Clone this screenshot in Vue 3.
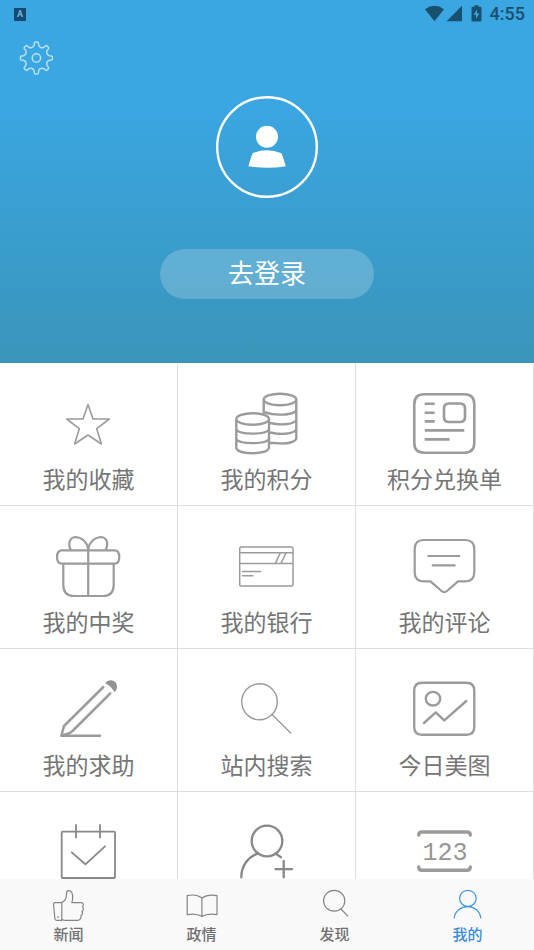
<script setup>
import { ref } from 'vue'

const active = ref('mine')

const point = (x, y, turn) => {
  const a = (turn * Math.PI) / 180
  const px = 20.4 + x * Math.cos(a) - y * Math.sin(a)
  const py = 20 + x * Math.sin(a) + y * Math.cos(a)
  return `${px.toFixed(2)} ${py.toFixed(2)}`
}

// Eight rounded teeth joined by curved valleys.
const gearPath =
  Array.from({ length: 8 }, (_, i) => {
    const t = i * 45
    return [
      `${i ? 'L' : 'M'}${point(-2.2, -13, t)}`,
      `L${point(-2.1, -14.8, t)}`,
      `Q${point(-2, -16, t)} ${point(-1, -16, t)}`,
      `L${point(1, -16, t)}`,
      `Q${point(2, -16, t)} ${point(2.1, -14.8, t)}`,
      `L${point(2.2, -13, t)}`,
      `C${point(3, -10.6, t)} ${point(-3, -10.6, t + 45)} ${point(-2.2, -13, t + 45)}`
    ].join('')
  }).join('') + 'Z'

const entries = [
  {
    id: 'favorites',
    label: '我的收藏',
    width: 1.6,
    d: 'M40 20.5L45 35H61.3L48.7 44.7L53.4 60L40 51L26.6 60L31.3 44.7L18.7 35H35Z'
  },
  {
    id: 'points',
    label: '我的积分',
    width: 2.4,
    d: 'M37.7 15.5A16.3 5.7 0 0 1 70.3 15.5A16.3 5.7 0 0 1 37.7 15.5V29M70.3 15.5V54C70.3 57.5 62 60 54 59.4L44 58.8M70.3 26C69 29.5 60 31 53 30.6Q45 30.4 39.5 28.5M70.3 36C68 40 58 41 50 40L43 38.8M70.3 45.5C68 49.5 58 50.5 50 49.5L44 48.5M10.3 35A16.3 5.7 0 0 1 43 35A16.3 5.7 0 0 1 10.3 35V64C12 71 41 71 43 64V35M10.3 45.5C13 51 40 51 43 45.5M10.3 55C13 60.5 40 60.5 43 55'
  },
  {
    id: 'orders',
    label: '积分兑换单',
    width: 2.6,
    d: 'M20.3 10.3H60.3Q70.3 10.3 70.3 20.3V58.7Q70.3 68.7 60.3 68.7H20.3Q10.3 68.7 10.3 58.7V20.3Q10.3 10.3 20.3 10.3ZM45 19.5H56Q61 19.5 61 24.5V33Q61 38 56 38H45Q40 38 40 33V24.5Q40 19.5 45 19.5ZM20.7 19.7H30.7M20.7 28.7H30.7M20.7 37.4H30.7M20.7 46.4H60.3M20.7 55.4H45.5',
    butt: true
  },
  {
    id: 'prizes',
    label: '我的中奖',
    width: 2.2,
    d: 'M14 23.3H66.5Q71.3 23.3 71.3 30T66.5 36.7H14Q9 36.7 9 30T14 23.3ZM15.3 36.7V58Q15.3 69 26 69H55Q65.7 69 65.7 58V36.7M40.2 20V69M22.7 23C19.5 16 22 10 28 10C34 10.5 39 15 40.2 22C41.5 15 46.5 10.5 52.5 10C58.5 10 61 16 57.7 23'
  },
  {
    id: 'bank',
    label: '我的银行',
    width: 1.5,
    d: 'M15.2 20H65.5Q67 20 67 21.5V57.5Q67 59 65.5 59H15.2Q13.7 59 13.7 57.5V21.5Q13.7 20 15.2 20ZM13.7 25.7H67M13.7 36.4H67M54.3 26L49.3 36.4M60 26L55 36.4M16.5 44.4H34.7M16.5 48.7H27'
  },
  {
    id: 'comments',
    label: '我的评论',
    width: 2.2,
    d: 'M19.7 13H61.3Q70.3 13 70.3 22V45.3Q70.3 54.3 61.3 54.3H54L43 64Q40.3 66.3 37.6 64L26.5 54.3H19.7Q10.7 54.3 10.7 45.3V22Q10.7 13 19.7 13ZM24.3 29H55.3M28.7 38.4H50.7'
  },
  {
    id: 'help',
    label: '我的求助',
    width: 2.5,
    d: 'M55.3 17L16 56L13.4 65.8H52M62.3 23.3L24.5 61Q23 62.6 20 63.6L13.4 65.8',
    fill: 'M57.2 13C60 9.4 65.6 9.4 68 13C69.8 16 69 20 66.7 22.3Q63.5 16.5 57.2 13Z'
  },
  {
    id: 'search',
    label: '站内搜索',
    width: 1.4,
    d: 'M15.7 31.8A17.8 18 0 1 1 51.3 31.8A17.8 18 0 1 1 15.7 31.8ZM45.7 44.3L64.7 63'
  },
  {
    id: 'pictures',
    label: '今日美图',
    width: 2.4,
    d: 'M18 12.7H62.3Q70.3 12.7 70.3 20.7V56.7Q70.3 64.7 62.3 64.7H18Q10.2 64.7 10.2 56.7V20.7Q10.2 12.7 18 12.7ZM21.8 28.7A7.2 6.8 0 1 1 36.2 28.7A7.2 6.8 0 1 1 21.8 28.7ZM20 53L31.7 42.4L40.3 50.4L62.3 31'
  },
  {
    id: 'calendar',
    width: 1.8,
    dark: true,
    d: 'M14.7 18.7H66Q67 18.7 67 19.7V64Q67 65 66 65H14.7Q13.7 65 13.7 64V19.7Q13.7 18.7 14.7 18.7ZM28 12V24.6M52 12V24.6M23.7 39.4L37.4 51.3L57 33.3'
  },
  {
    id: 'invite',
    width: 2.3,
    dark: true,
    d: 'M25.7 28A15.3 15.3 0 1 1 56.3 28A15.3 15.3 0 1 1 25.7 28ZM15.3 64.4C15.3 53 22 43.5 32.3 40.3M49.3 40.4L55 44.2M57.7 48V64.4M49.5 56.2H66'
  },
  {
    id: 'code',
    width: 3.4,
    d: 'M14.7 22Q14.7 19 18 19H63Q66.3 19 66.3 22M14.7 54Q14.7 57.3 18 57.3H63Q66.3 57.3 66.3 54',
    text: '123'
  }
]

const tabs = [
  {
    id: 'news',
    label: '新闻',
    d: 'M4 14.7H10.8V32.4H5.6Q4 32.4 3.9 30.8L2.5 16.4Q2.5 14.7 4 14.7ZM10.8 14.7C15 12 15.5 10 15.5 5C15.6 1.8 19.5 1.8 20.8 4.6C22.2 8 22 11 20.8 14.7H30C32.5 14.9 33 17.2 31.6 18.8C32.8 20.4 32.4 22.4 31 23.4C32 25 31.4 26.8 30 27.6C30.4 30 29 32.4 26.5 32.4H14Q12 32.4 10.8 31.2M7 28.6V29.4'
  },
  {
    id: 'politics',
    label: '政情',
    d: 'M17.9 10C14 7 8 6.6 3.2 7.6V26.6C8 25.8 14 25.8 17.9 28.6C22 25.8 28 25.8 33 26.6V7.6C28 6.6 22 7 17.9 10ZM17.9 10V28.6'
  },
  {
    id: 'discover',
    label: '发现',
    d: 'M6.6 12.7A10.6 10.4 0 1 1 27.8 12.7A10.6 10.4 0 1 1 6.6 12.7ZM24 21L30.6 27.8'
  },
  {
    id: 'mine',
    label: '我的',
    d: 'M9.6 10.3A8.3 8 0 1 1 26.2 10.3A8.3 8 0 1 1 9.6 10.3ZM4.2 30C5 23 11 18.7 17.6 18.7S30 23 30.8 30'
  }
]
</script>

<template>
  <div class="app">
    <main class="content">
      <header class="hero">
        <div class="status">
          <svg class="status-badge" viewBox="0 0 12 13" aria-hidden="true">
            <rect width="12" height="13" rx="1" />
            <text x="6" y="9" text-anchor="middle">A</text>
          </svg>
          <div class="status-right">
            <svg class="status-icons" viewBox="0 0 58 18" aria-hidden="true">
              <path d="M0 4.2Q9.5 -2.6 19 4.2L9.5 16.2Z" />
              <path d="M37 .8V16.2H21.6Z" />
              <path
                fill-rule="evenodd"
                d="M49.5 .2H53.5V1.8H55.2Q56.5 1.8 56.5 3V15.2Q56.5 16.4 55.2 16.4H47.8Q46.5 16.4 46.5 15.2V3Q46.5 1.8 47.8 1.8H49.5ZM52 4.4L48.6 9.8H51V13.8L54.4 8.4H52Z"
              />
            </svg>
            <time>4:55</time>
          </div>
        </div>
        <button class="settings" type="button" aria-label="设置">
          <svg viewBox="0 0 40 40" aria-hidden="true">
            <path :d="gearPath" />
            <circle cx="20.4" cy="20" r="4.2" />
          </svg>
        </button>
        <svg class="avatar" viewBox="0 0 102 102" aria-hidden="true">
          <circle class="ring" cx="51" cy="51" r="49.8" />
          <circle cx="51" cy="40.8" r="11" />
          <path d="M36.7 57.2Q51 51.2 65.5 57.2Q67.5 62 69.8 70.3Q51 73.4 32.3 70.3Q34.5 62 36.7 57.2Z" />
        </svg>
        <button class="login" type="button">去登录</button>
      </header>

      <nav class="grid" aria-label="功能">
        <a v-for="entry in entries" :key="entry.id" class="entry" href="#">
          <svg
            class="entry-icon"
            :class="{ dark: entry.dark, butt: entry.butt }"
            viewBox="1 0 80 80"
            aria-hidden="true"
          >
            <path :d="entry.d" :stroke-width="entry.width" />
            <path v-if="entry.fill" class="solid" :d="entry.fill" />
            <text v-if="entry.text" x="41" y="47" text-anchor="middle">{{ entry.text }}</text>
          </svg>
          <span v-if="entry.label" class="entry-label">{{ entry.label }}</span>
        </a>
      </nav>
    </main>

    <nav class="tabs" aria-label="主导航">
      <button
        v-for="tab in tabs"
        :key="tab.id"
        class="tab"
        :class="{ active: active === tab.id }"
        type="button"
        @click="active = tab.id"
      >
        <svg class="tab-icon" viewBox="0 0 36 36" aria-hidden="true"><path :d="tab.d" /></svg>
        <span>{{ tab.label }}</span>
      </button>
    </nav>
  </div>
</template>

<style>
body {
  margin: 0;
}
</style>

<style scoped>
.app {
  display: flex;
  flex-direction: column;
  height: 100vh;
  background: #fff;
  font-family: Roboto, "Noto Sans CJK SC", sans-serif;
}

button {
  margin: 0;
  padding: 0;
  border: 0;
  background: none;
  font-family: inherit;
  cursor: pointer;
}

.content {
  flex: 1;
  min-height: 0;
  overflow-y: auto;
  scrollbar-width: none;
}

.hero {
  display: flex;
  flex-direction: column;
  align-items: center;
  padding-bottom: 64px;
  background: linear-gradient(#3aa6e2 0%, #3aa6e2 28%, #3a95ba 100%);
}

.status {
  display: flex;
  align-items: center;
  justify-content: space-between;
  align-self: stretch;
  height: 28px;
  padding: 0 9px 0 14px;
  color: #18506f;
}

.status-badge {
  width: 12px;
  height: 13px;
  fill: #124a72;
}

.status-badge text {
  fill: #6fb4d8;
  font-size: 9px;
  font-weight: 700;
}

.status-right {
  display: flex;
  align-items: center;
  gap: 7px;
}

.status-icons {
  width: 58px;
  height: 18px;
  fill: #18506f;
}

time {
  font-size: 18px;
  font-weight: 500;
  line-height: 28px;
}

.settings {
  align-self: flex-start;
  width: 40px;
  height: 40px;
  margin: 10px 16px 18px;
}

.settings svg {
  display: block;
  fill: none;
  stroke: #b8e0f8;
  stroke-width: 1.5;
  stroke-linejoin: round;
}

.avatar {
  width: 102px;
  height: 102px;
  fill: #fff;
}

.ring {
  fill: none;
  stroke: #fff;
  stroke-width: 2.4;
}

.login {
  width: 40%;
  height: 50px;
  margin-top: 51px;
  border-radius: 25px;
  background: rgba(255, 255, 255, 0.2);
  color: #fff;
  font-size: 26px;
  line-height: 48px;
}

.grid {
  display: grid;
  grid-template-columns: repeat(3, 1fr);
}

.entry {
  display: flex;
  flex-direction: column;
  align-items: center;
  gap: 1px;
  padding: 21px 0 8px;
  border-right: 1px solid #dedede;
  border-bottom: 1px solid #dedede;
  color: #757575;
  text-decoration: none;
}

.entry-icon {
  width: 80px;
  height: 80px;
  fill: none;
  stroke: #9b9b9b;
  stroke-linecap: round;
  stroke-linejoin: round;
}

.entry-icon.dark {
  stroke: #888;
}

.entry-icon.butt {
  stroke-linecap: butt;
}

.entry-icon .solid {
  fill: #929292;
  stroke: none;
}

.entry-icon text {
  fill: #969696;
  stroke: none;
  font-family: "Liberation Mono", monospace;
  font-size: 25px;
}

.entry-label {
  font-size: 23px;
  line-height: 32px;
}

.tabs {
  display: grid;
  grid-template-columns: repeat(4, 1fr);
  padding-left: 2px;
  background: #f9f9f9;
}

.tab {
  display: flex;
  flex-direction: column;
  align-items: center;
  padding: 9px 0 4px;
  color: #707070;
  font-size: 15px;
  font-weight: 500;
  line-height: 22px;
}

.tab-icon {
  width: 36px;
  height: 36px;
  fill: none;
  stroke: #858585;
  stroke-width: 1.2;
  stroke-linecap: round;
  stroke-linejoin: round;
}

.tab.active {
  color: #3a8de0;
}

.tab.active .tab-icon {
  stroke: #3f95de;
}
</style>
